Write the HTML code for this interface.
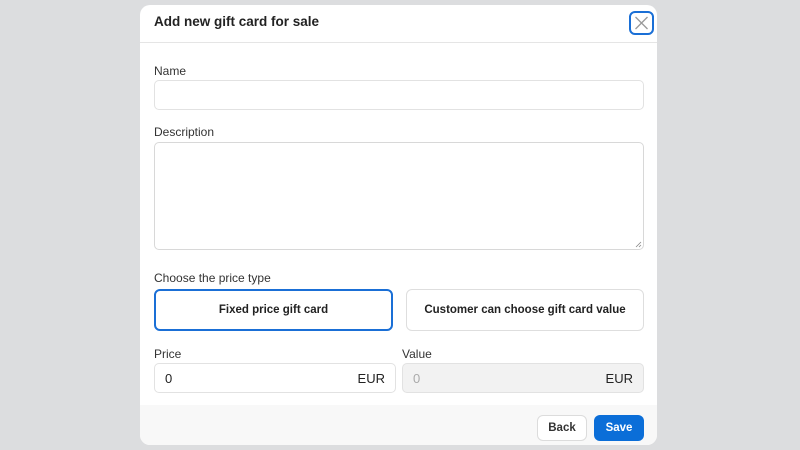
<!DOCTYPE html>
<html><head><style>
*{box-sizing:border-box;margin:0;padding:0}
body{width:800px;height:450px;background:#dcdddf;font-family:"Liberation Sans",sans-serif;position:relative;overflow:hidden;color:#222}
.m{position:absolute;left:140px;top:5px;width:517px;height:440px;background:#fff;border-radius:10px;overflow:hidden}
.a{position:absolute}
.lbl{font-size:12px;color:#333}
.in{border:1px solid #e2e2e2;border-radius:5px;background:#fff}
.btn{display:flex;align-items:center;justify-content:center;font-size:11.5px;font-weight:bold;color:#222;border-radius:6px}
</style></head><body>
<div class="m">
<div class="a" style="left:14px;top:9px;font-size:13.5px;font-weight:bold;color:#222">Add new gift card for sale</div>
<div class="a" style="left:489px;top:6px;width:25px;height:24px;border:2px solid #1a6fd6;border-radius:6px">
<svg width="21" height="20" viewBox="0 0 21 20"><path d="M4.5 4L16.5 16M16.5 4L4.5 16" stroke="#999" stroke-width="1.3"/></svg></div>
<div class="a" style="left:0;top:37px;width:517px;height:1px;background:#e5e5e5"></div>
<div class="a lbl" style="left:14px;top:59px">Name</div>
<div class="a in" style="left:14px;top:75px;width:490px;height:30px"></div>
<div class="a lbl" style="left:14px;top:120px">Description</div>
<div class="a in" style="left:14px;top:137px;width:490px;height:108px;border-color:#d8d8d8">
<svg class="a" style="right:1px;bottom:1px" width="7" height="7"><path d="M1 6L6 1M4 6L6 4" stroke="#888" stroke-width="0.8"/></svg></div>
<div class="a lbl" style="left:14px;top:266px">Choose the price type</div>
<div class="a btn" style="left:14px;top:284px;width:239px;height:42px;border:2px solid #1a6fd6">Fixed price gift card</div>
<div class="a btn" style="left:266px;top:284px;width:238px;height:42px;border:1px solid #dedede">Customer can choose gift card value</div>
<div class="a lbl" style="left:14px;top:342px">Price</div>
<div class="a lbl" style="left:262px;top:342px">Value</div>
<div class="a in" style="left:14px;top:358px;width:242px;height:30px;font-size:13px;display:flex;justify-content:space-between;align-items:center;padding:0 10px">
<span>0</span><span>EUR</span></div>
<div class="a in" style="left:262px;top:358px;width:242px;height:30px;font-size:13px;display:flex;justify-content:space-between;align-items:center;padding:0 10px;background:#f2f2f2"><span style="color:#aaa">0</span><span>EUR</span></div>
<div class="a" style="left:0;top:400px;width:517px;height:40px;background:#f8f8f8"></div>
<div class="a btn" style="left:397px;top:410px;width:50px;height:26px;border:1px solid #dcdcdc;background:#fff;color:#333">Back</div>
<div class="a btn" style="left:454px;top:410px;width:50px;height:26px;background:#0b6ed8;color:#fff">Save</div>
</div>
</body></html>
